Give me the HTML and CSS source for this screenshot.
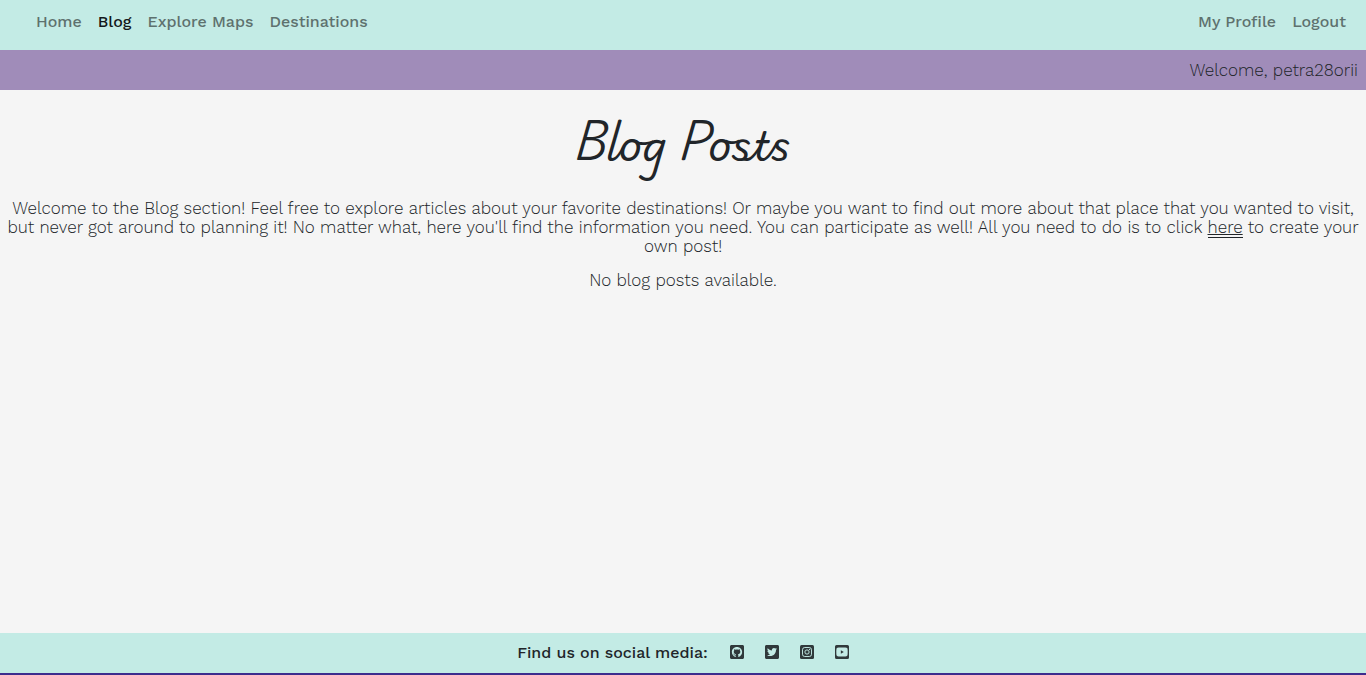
FILE: index.html
```html
<!DOCTYPE html>
<html lang="en">
<head>
<meta charset="utf-8">
<meta name="viewport" content="width=device-width, initial-scale=1">
<title>Blog Posts</title>
<link rel="stylesheet" href="styles.css">
</head>
<body>
<header>
  <nav class="navbar" aria-label="Main">
    <div class="nav-group">
      <a class="nav-link" href="#">Home</a>
      <a class="nav-link active" href="#" aria-current="page">Blog</a>
      <a class="nav-link" href="#">Explore Maps</a>
      <a class="nav-link" href="#">Destinations</a>
    </div>
    <div class="nav-group">
      <a class="nav-link" href="#">My Profile</a>
      <a class="nav-link" href="#">Logout</a>
    </div>
  </nav>
  <p class="welcome">Welcome, petra28orii</p>
</header>
<main class="content">
  <h1 class="title">Blog Posts</h1>
  <p class="text">Welcome to the Blog section! Feel free to explore articles about your favorite destinations! Or maybe you want to find out more about that place that you wanted to visit, but never got around to planning it! No matter what, here you'll find the information you need. You can participate as well! All you need to do is to click <a class="create-link" href="#">here</a> to create your own post!</p>
  <p class="text">No blog posts available.</p>
</main>
<footer class="footer">
  <span class="footer-label">Find us on social media:</span>
  <div class="social">
    <a class="social-link" href="#" aria-label="GitHub"><svg class="icon" viewBox="0 32 448 448"><path d="M400 32H48C21.500 32 0 53.500 0 80v352c0 26.500 21.500 48 48 48h352c26.500 0 48-21.500 48-48V80c0-26.500-21.500-48-48-48zM277.300 415.700c-8.400 1.500-11.500-3.700-11.500-8 0-5.400.2-33 .2-55.300 0-15.600-5.200-25.500-11.300-30.700 37-4.100 76-9.200 76-73.100 0-18.200-6.500-27.300-17.100-39 1.700-4.300 7.400-22-1.700-45-13.900-4.300-45.700 17.900-45.700 17.900-13.200-3.700-27.500-5.600-41.600-5.600-14.100 0-28.400 1.900-41.600 5.600 0 0-31.800-22.200-45.700-17.900-9.100 22.900-3.500 40.600-1.700 45-10.600 11.700-15.600 20.800-15.600 39 0 63.600 37.300 69 74.300 73.100-4.800 4.300-9.100 11.700-10.600 22.300-9.500 4.300-33.800 11.700-48.300-13.900-9.100-15.800-25.500-17.100-25.500-17.100-16.200-.2-1.100 10.200-1.100 10.200 10.800 5 18.400 24.200 18.400 24.200 9.700 29.700 56.100 19.700 56.100 19.700 0 13.900.2 36.500.2 40.600 0 4.300-3 9.500-11.500 8-66-22.100-112.200-84.900-112.200-158.300 0-91.800 70.200-161.500 162-161.500S388 165.600 388 257.400c.1 73.400-44.700 136.300-110.700 158.300z"/></svg></a>
    <a class="social-link" href="#" aria-label="Twitter"><svg class="icon" viewBox="0 32 448 448"><path d="M400 32H48C21.500 32 0 53.500 0 80v352c0 26.500 21.500 48 48 48h352c26.500 0 48-21.500 48-48V80c0-26.500-21.500-48-48-48zm-48.900 158.800c.2 2.800.2 5.700.2 8.500 0 86.700-66 186.600-186.600 186.600-37.200 0-71.700-10.800-100.700-29.400 5.300.6 10.400.8 15.800.8 30.700 0 58.900-10.400 81.400-28-28.800-.6-53-19.500-61.300-45.500 10.100 1.500 19.200 1.500 29.600-1.200-30-6.100-52.500-32.500-52.500-64.400v-.8c8.700 4.900 18.900 7.900 29.600 8.300a65.400 65.400 0 0 1-29.200-54.600c0-12.200 3.200-23.400 8.900-33.100 32.300 39.800 80.800 65.800 135.200 68.600-9.300-44.500 24-80.600 64-80.600 18.900 0 35.900 7.900 47.900 20.700 14.800-2.800 29-8.300 41.600-15.800-4.900 15.200-15.200 28-28.800 36.100 13.200-1.400 26-5.100 37.800-10.200-8.900 13.100-20.100 24.700-32.900 34z"/></svg></a>
    <a class="social-link" href="#" aria-label="Instagram"><svg class="icon" viewBox="0 32 448 448"><rect y="32" width="448" height="448" rx="48"/><rect class="camera" x="80" y="112" width="288" height="288" rx="72"/><circle class="camera" cx="224" cy="256" r="68"/><circle class="flash" cx="307" cy="173" r="20"/></svg></a>
    <a class="social-link" href="#" aria-label="YouTube"><svg class="icon" viewBox="0 32 448 448"><path fill-rule="evenodd" d="M48 32h352a48 48 0 0 1 48 48v352a48 48 0 0 1-48 48H48a48 48 0 0 1-48-48V80a48 48 0 0 1 48-48zM224 112s-120 0-145 8c-17 5-26 14-30 31-7 27-7 105-7 105s0 77 7 105c4 16 14 26 30 31 25 8 145 8 145 8s120 0 145-8c16-5 26-15 30-31 7-28 7-105 7-105s0-78-7-105c-4-17-13-26-30-31-25-8-145-8-145-8zM187 203l95 53-95 54z"/></svg></a>
  </div>
</footer>
</body>
</html>
```
FILE: styles.css
```css
* {
  box-sizing: border-box;
}

body {
  display: flex;
  flex-direction: column;
  min-height: 100vh;
  margin: 0;
  background: #f5f5f5;
  color: #212529;
  font-family: "Work Sans", Inter, sans-serif;
  font-size: 17px;
  font-weight: 300;
  line-height: 19px;
}

a {
  color: inherit;
  text-decoration: none;
}

.navbar {
  display: flex;
  justify-content: space-between;
  min-height: 50px;
  padding: 12px 20px 14px 36px;
  background: #c3ebe5;
}

.nav-group {
  display: flex;
  gap: 16px;
}

.nav-link {
  color: #5e716e;
  font-size: 16px;
  font-weight: 500;
}

.nav-link.active {
  color: #14181a;
}

.welcome {
  margin: 0;
  padding: 11px 8px 10px;
  background: #a08cb9;
  text-align: right;
}

.content {
  flex: 1;
  padding: 16px 4px;
  text-align: center;
}

.title {
  margin: 0 0 21px;
  font-family: "Playwrite AU SA", Lato, sans-serif;
  font-size: 40px;
  font-weight: 400;
  line-height: 72px;
}

.text {
  margin: 0 0 15px;
}

.create-link {
  border-bottom: 1px solid #212529;
  text-decoration: underline;
}

.footer {
  display: flex;
  align-items: center;
  justify-content: center;
  gap: 22px;
  padding: 10px 8px 11px;
  border-bottom: 2px solid #3d2c8d;
  background: #c3ebe5;
}

.footer-label {
  font-size: 16px;
  font-weight: 500;
}

.social {
  display: flex;
  gap: 21px;
  padding-bottom: 2px;
}

.social-link {
  display: flex;
}

.icon {
  width: 14px;
  height: 14px;
  fill: #30393b;
}

.camera {
  fill: none;
  stroke: #c3ebe5;
  stroke-width: 30px;
}

.flash {
  fill: #c3ebe5;
}
```
